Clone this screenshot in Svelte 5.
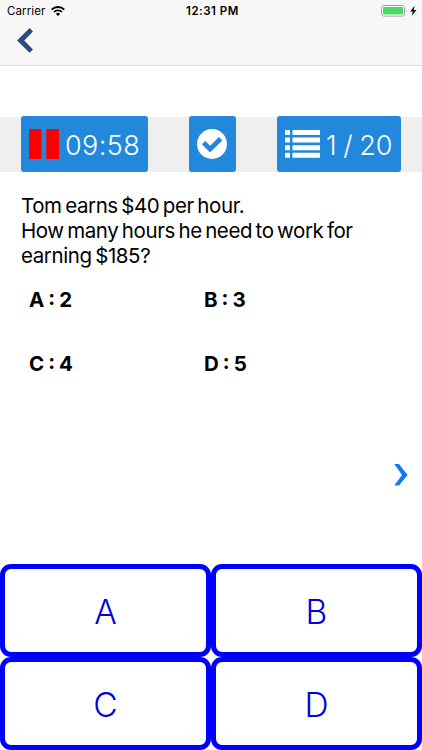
<script>
    let time = "09:58"
    let current = 1
    let total = 20
    let question = "Tom earns $40 per hour.\nHow many hours he need to work for\nearning $185?"
    let answers = [
        { key: "A", value: 2 },
        { key: "B", value: 3 },
        { key: "C", value: 4 },
        { key: "D", value: 5 },
    ]
    let selected = null

    function choose(key) {
        selected = key
    }
</script>

<div class="screen">
    <header>
        <div class="status">
            <div class="carrier">
                <span>Carrier</span>
                <svg width="14" height="10" viewBox="0 0 14 10">
                    <path d="M0.7 3.6a9 9 0 0 1 12.6 0" fill="none" stroke="#000" stroke-width="1.9" />
                    <path d="M3 6a5.7 5.7 0 0 1 8 0" fill="none" stroke="#000" stroke-width="1.7" />
                    <path d="M4.9 7.9a3 3 0 0 1 4.2 0L7 10z" />
                </svg>
            </div>
            <span class="clock">12:31 PM</span>
            <div class="power">
                <svg width="37" height="12" viewBox="0 0 37 12">
                    <rect x="0.5" y="0.5" width="23" height="10.6" rx="2.2" fill="#fff" stroke="#a3a3a3" />
                    <rect x="2" y="2" width="20" height="7.6" rx="0.8" fill="#4cd964" />
                    <path d="M24.9 4.2q1.4 1.6 0 3.4z" fill="#a3a3a3" />
                    <path d="M33.6 0.8L29.2 6.4h2.6l-1 4.4 4.7-5.8h-2.8z" />
                </svg>
            </div>
        </div>
        <button class="back" aria-label="Back">
            <svg width="16" height="25" viewBox="0 0 16 25">
                <path d="M12.6 0L16 3.4 7.2 12.4 16 21.4 12.6 24.8 0 12.4z" fill="#2c4a80" />
            </svg>
        </button>
    </header>

    <div class="toolbar">
        <button class="tool timer">
            <svg width="30" height="30" viewBox="0 0 30 30">
                <rect width="12.5" height="30" rx="1" fill="#f00" />
                <rect x="17.2" width="12.8" height="30" rx="1" fill="#f00" />
            </svg>
            <span>{time}</span>
        </button>
        <button class="tool check" aria-label="Finish">
            <svg width="30" height="30" viewBox="0 0 30 30">
                <circle cx="15" cy="15" r="15" fill="#fff" />
                <path d="M6.6 13.6l6.5 6.5L23.6 9.8" fill="none" stroke="#2288dc" stroke-width="4.8" />
            </svg>
        </button>
        <button class="tool counter">
            <svg width="35" height="28" viewBox="0 0 35 28" fill="#fff">
                {#each [0, 7.6, 15.2, 22.8] as y}
                    <rect x="0" {y} width="5" height="5" rx="0.5" />
                    <rect x="7.5" {y} width="27.5" height="5" rx="0.5" />
                {/each}
            </svg>
            <span>{current} / {total}</span>
        </button>
    </div>

    <main>
        <p>{question}</p>
        <div class="options">
            {#each answers as answer}
                <span>{answer.key} : {answer.value}</span>
            {/each}
        </div>
        <button class="next" aria-label="Next question">
            <svg width="15" height="22" viewBox="0 0 15 22">
                <path d="M0.3 0H5l8.6 10.9L5 21.6H0.3L8 10.9z" fill="#0f79f5" />
            </svg>
        </button>
    </main>

    <div class="choices">
        {#each answers as answer}
            <button class:selected={selected === answer.key} on:click={() => choose(answer.key)}>{answer.key}</button>
        {/each}
    </div>
</div>

<style>
    :global(body) {
        margin: 0;
        background: #fff;
    }

    .screen {
        display: flex;
        flex-direction: column;
        width: 422px;
        height: 750px;
        overflow: hidden;
        font-family: Inter, "Liberation Sans", sans-serif;
        color: #000;
    }

    button {
        margin: 0;
        padding: 0;
        border: none;
        background: none;
        font: inherit;
    }

    svg {
        display: block;
        flex-shrink: 0;
    }

    header {
        height: 65px;
        background: #f7f7f7;
        border-bottom: 1px solid #dcdcdc;
    }

    .status {
        display: grid;
        grid-template-columns: 1fr auto 1fr;
        align-items: center;
        height: 22px;
        padding: 0 4px 0 7px;
        font-size: 11.5px;
    }

    .carrier {
        display: flex;
        align-items: center;
        gap: 6px;
        letter-spacing: 0.1px;
    }

    .clock {
        font-weight: 600;
        letter-spacing: 0.5px;
    }

    .power {
        display: flex;
        justify-content: flex-end;
    }

    .back {
        display: block;
        margin: 6px 0 0 17px;
    }

    .toolbar {
        display: flex;
        justify-content: space-between;
        height: 55px;
        margin-top: 51px;
        padding: 0 21px;
        background: #efefef;
    }

    .tool {
        display: flex;
        align-items: center;
        box-sizing: border-box;
        height: 56px;
        margin-top: -1px;
        padding: 0 8px;
        border-radius: 3px;
        background: #2288dc;
        color: #fff;
        font-size: 27px;
        font-weight: 350;
        white-space: nowrap;
    }

    .tool span {
        padding-top: 2px;
    }

    .timer {
        width: 127px;
        gap: 6px;
        letter-spacing: 0.4px;
    }

    .check {
        width: 47px;
    }

    .counter {
        width: 124px;
        gap: 6px;
        word-spacing: -1px;
    }

    main {
        flex: 1;
        display: flex;
        flex-direction: column;
        padding: 21px 13px 0 21px;
    }

    p {
        margin: 0;
        font-size: 20.5px;
        line-height: 25px;
        letter-spacing: -0.4px;
        word-spacing: -1.9px;
        white-space: pre-line;
    }

    .options {
        display: grid;
        grid-template-columns: 175px 1fr;
        row-gap: 39px;
        margin: 19px 0 0 8px;
        font-size: 20.5px;
        line-height: 25px;
        font-weight: 650;
        word-spacing: -0.8px;
    }

    .next {
        align-self: flex-end;
        margin-top: 88px;
    }

    .choices {
        display: grid;
        grid-template-columns: 1fr 1fr;
        grid-auto-rows: 93px;
    }

    .choices button {
        border: 5px solid #00f;
        border-radius: 11px;
        padding-top: 2px;
        color: #0000e0;
        font-size: 33.5px;
        font-weight: 350;
    }

    .choices .selected {
        background: #e6e6ff;
    }
</style>
